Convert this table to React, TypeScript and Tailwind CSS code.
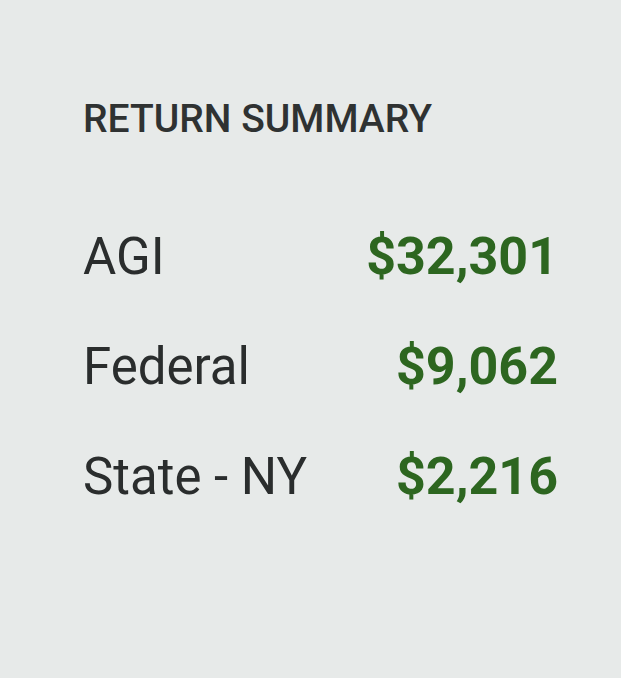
const rows = [
  { label: "AGI", value: "$32,301" },
  { label: "Federal", value: "$9,062" },
  { label: "State - NY", value: "$2,216" },
];

export default function App() {
  return (
    <div className="min-h-[678px] w-[621px] bg-[#e7eae9] font-['Roboto',sans-serif] pl-[83px] pr-[63px] pt-[95px]">
      <h2 className="text-[39px] font-medium leading-[48px] text-[#2f3232]">RETURN SUMMARY</h2>
      <div className="mt-[88px] flex flex-col gap-[58px]">
        {rows.map((row) => (
          <div key={row.label} className="flex items-center justify-between leading-[52px]">
            <span className="text-[51px] text-[#2a2d2d]">{row.label}</span>
            <span className="text-[52px] font-bold text-[#2d6620]">{row.value}</span>
          </div>
        ))}
      </div>
    </div>
  );
}
